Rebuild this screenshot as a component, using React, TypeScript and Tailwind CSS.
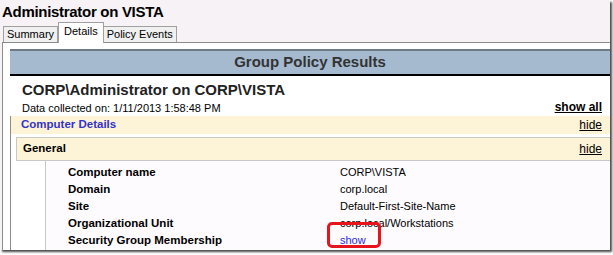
export default function App() {
  const rows: [string, string][] = [
    ['Computer name', 'CORP\\VISTA'],
    ['Domain', 'corp.local'],
    ['Site', 'Default-First-Site-Name'],
    ['Organizational Unit', 'corp.local/Workstations'],
  ];

  return (
    <div className="w-[613px] h-[255px] bg-white" style={{ fontFamily: '"Liberation Sans", Arial, sans-serif' }}>
      <div className="relative w-[610px] h-[250px] overflow-hidden bg-[#f6f2f6] shadow-[2px_2px_2px_#4a4a4a]">
        {/* window title */}
        <div className="h-[21px] pl-[2px] pt-[3px] text-[15px] leading-[17px] font-bold tracking-[-0.3px] text-black">
          Administrator on VISTA
        </div>

        {/* tabs */}
        <div className="flex items-end h-[21px] pl-[3px] text-[11px] text-black">
          <div className="h-[16px] px-[3px] border border-b-0 border-[#a0a0a0] bg-[#f0f0f0] leading-[15px]">Summary</div>
          <div className="h-[21px] px-[5px] border border-b-0 border-[#a0a0a0] bg-white leading-[17px] -mb-px relative z-10">Details</div>
          <div className="h-[16px] px-[3px] border border-b-0 border-l-0 border-[#a0a0a0] bg-[#f0f0f0] leading-[15px]">Policy Events</div>
        </div>

        {/* panel */}
        <div className="ml-[2px] h-full border-l border-t border-[#8c8c8c] bg-white pl-[7px] pt-[6px]">
          <div className="h-[27px] bg-[#a5b9cf] border-t-2 border-[#6e7a86] border-b-2 border-b-black flex items-center justify-center text-[15px] font-bold text-[#333]">
            Group Policy Results
          </div>

          <div className="pl-[12px] pt-[4px] text-[15px] leading-[19px] font-bold text-[#222]">
            CORP\Administrator on CORP\VISTA
          </div>
          <div className="flex items-end justify-between pl-[12px] pr-[8px] h-[17px] text-[11px] text-black">
            <span>Data collected on: 1/11/2013 1:58:48 PM</span>
            <a className="text-[12px] font-bold underline">show all</a>
          </div>

          {/* computer details section */}
          <div className="border-l border-[#8c8c8c]">
            <div className="flex items-center justify-between h-[18px] bg-[#fdf3d6] pl-[10px] pr-[8px] text-[12px]">
              <span className="text-[11.5px] font-bold text-[#3333cc]">Computer Details</span>
              <a className="underline text-black">hide</a>
            </div>
            <div className="pl-[5px] pt-[3px]">
              <div className="flex items-center justify-between h-[24px] bg-[#fdf3d6] border border-r-0 border-[#c8c8c8] pl-[6px] pr-[8px] text-[12px] text-black">
                <span className="text-[11.5px] font-bold">General</span>
                <a className="underline">hide</a>
              </div>
              <div className="ml-[29px] border-l border-[#c8c8c8] bg-[#fefbfe] pl-[22px] pt-[3px] h-[120px] text-[11px] text-black">
                {rows.map(([k, v]) => (
                  <div key={k} className="flex h-[17px] items-center">
                    <span className="w-[272px] text-[11.5px] font-bold">{k}</span>
                    <span>{v}</span>
                  </div>
                ))}
                <div className="flex h-[17px] items-center">
                  <span className="w-[272px] text-[11.5px] font-bold">Security Group Membership</span>
                  <span className="relative text-[#2a2ae6]">
                    show
                    <span className="absolute -left-[13px] -top-[10px] w-[54px] h-[26px] border-[3px] border-[#e8141c] rounded-[5px]" />
                  </span>
                </div>
              </div>
            </div>
          </div>
        </div>
      </div>
    </div>
  );
}
